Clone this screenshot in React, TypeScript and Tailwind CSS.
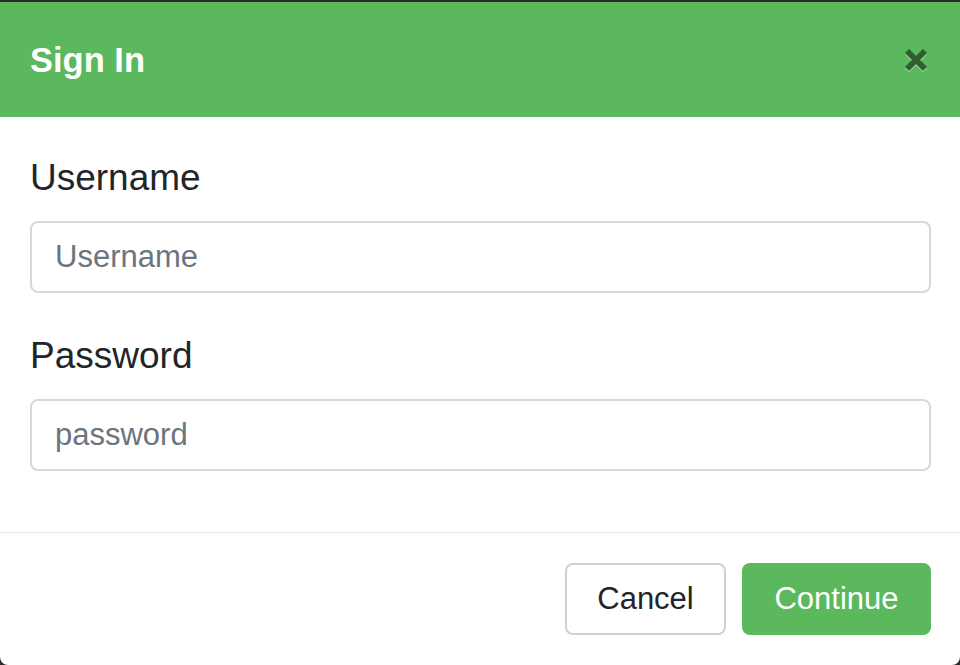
export default function App() {
  return (
    <div className="h-[665px] w-[960px] bg-[#2b2b2b] pt-[2px] font-['Liberation_Sans',Arial,sans-serif] overflow-hidden">
      <div className="h-[663px] bg-white rounded-b-[8px] flex flex-col">
        {/* header */}
        <div className="h-[115px] bg-[#5cb85c] flex items-center justify-between pl-[30px] pr-[31px]">
          <h1 className="text-[34.5px] font-bold text-white leading-none pt-[1px]">Sign In</h1>
          <button className="w-[26px] h-[26px] flex items-center justify-center">
            <svg width="26" height="26" viewBox="0 0 26 26" className="drop-shadow-[0_1px_0_rgba(255,255,255,0.6)]">
              <path d="M4 4 L22 22 M22 4 L4 22" stroke="#2f5e2f" strokeWidth="6" strokeLinecap="butt" />
            </svg>
          </button>
        </div>

        {/* body */}
        <div className="flex-1 pl-[30px] pr-[29px] pt-[32px]">
          <label className="block text-[37px] leading-[54px] text-[#212529] pt-[2px] mb-[16px]">Username</label>
          <input
            placeholder="Username"
            className="block w-full h-[72px] border-[2px] border-[#d6d9dc] rounded-[8px] px-[23px] text-[31px] text-[#495057] placeholder:text-[#6c757d] outline-none"
          />
          <label className="block text-[37px] leading-[54px] text-[#212529] mt-[34px] pt-[2px] mb-[16px]">Password</label>
          <input
            type="password"
            placeholder="password"
            className="block w-full h-[72px] border-[2px] border-[#d6d9dc] rounded-[8px] px-[23px] text-[31px] text-[#495057] placeholder:text-[#6c757d] outline-none"
          />
        </div>

        {/* footer */}
        <div className="border-t border-[#e6e9eb] flex justify-end gap-[16px] pt-[30px] pb-[30px] pr-[29px]">
          <button className="w-[161px] h-[72px] rounded-[8px] border-[2px] border-[#cfd2d4] bg-white text-[31px] text-[#212529]">
            Cancel
          </button>
          <button className="w-[189px] h-[72px] rounded-[8px] bg-[#5cb85c] text-[31px] text-white">
            Continue
          </button>
        </div>
      </div>
    </div>
  )
}
